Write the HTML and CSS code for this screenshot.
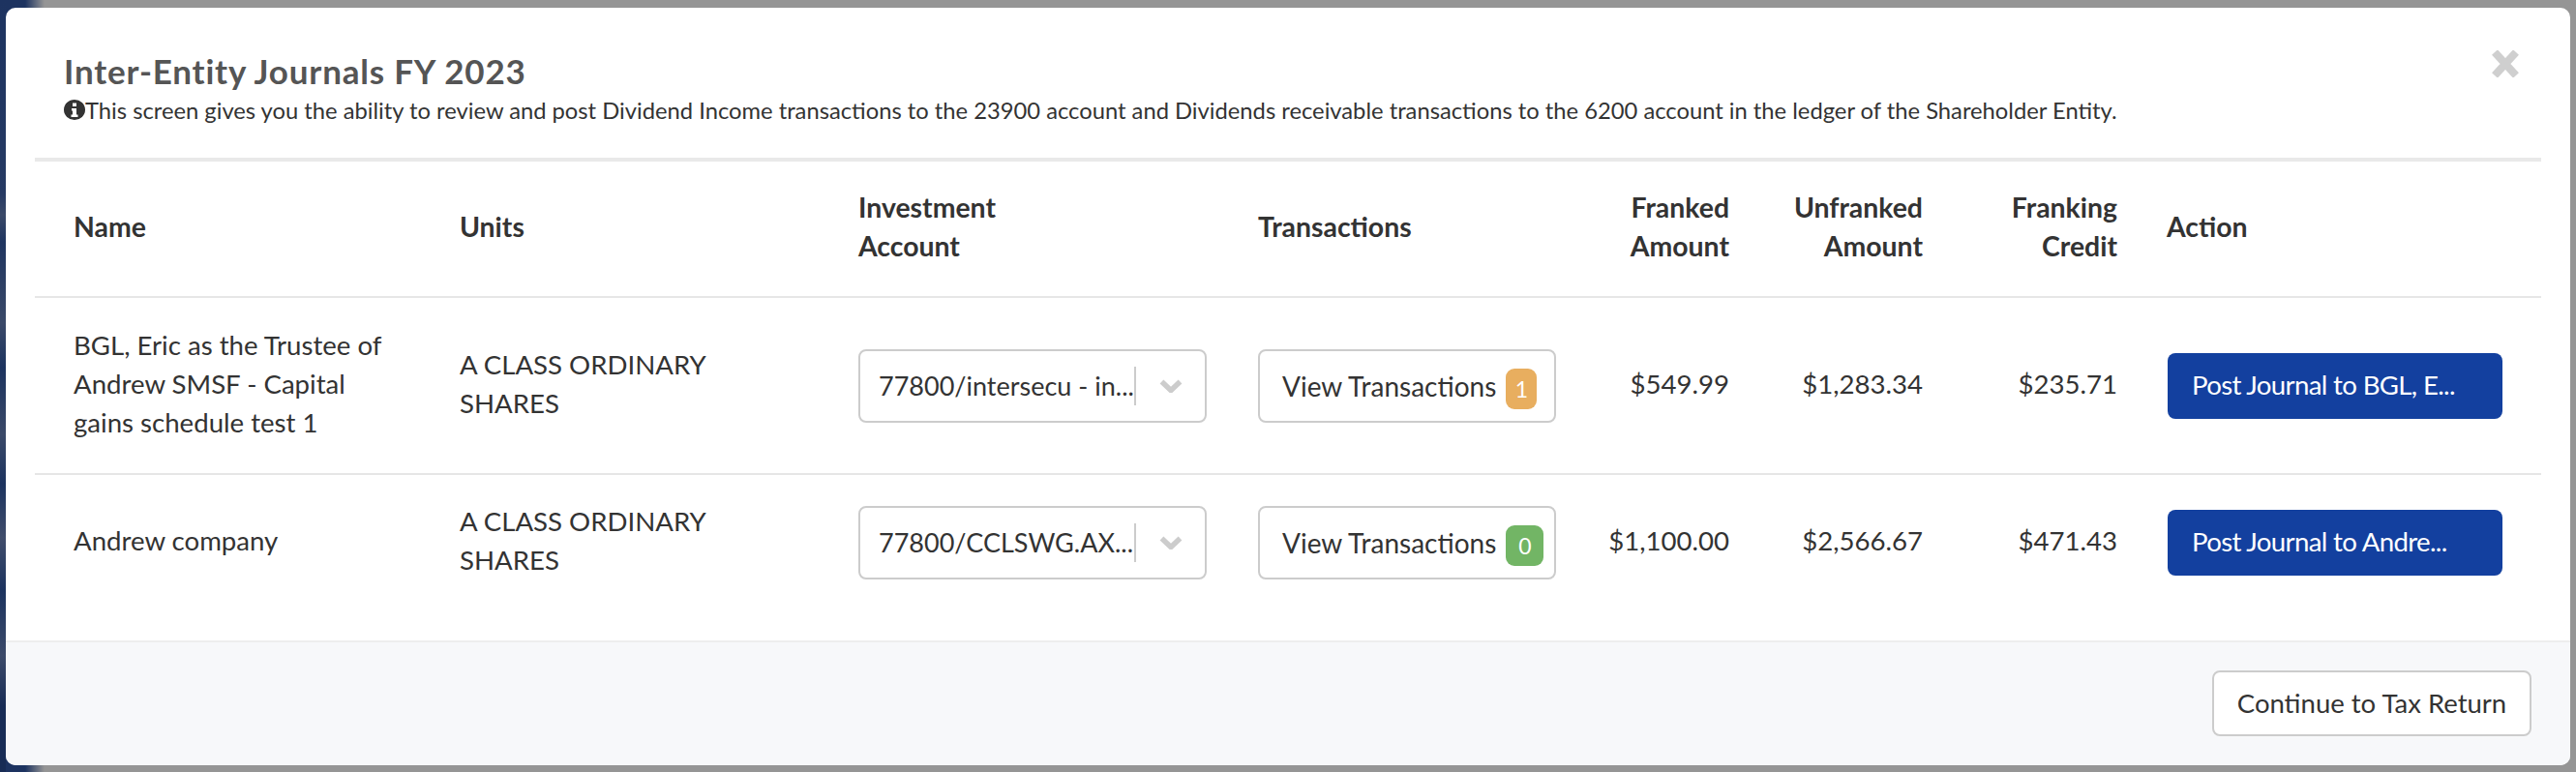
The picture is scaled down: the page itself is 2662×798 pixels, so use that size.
FILE: index.html
```html
<!DOCTYPE html>
<html lang="en">
<head>
<meta charset="utf-8">
<title>Inter-Entity Journals FY 2023</title>
<link rel="stylesheet" href="styles.css">
</head>
<body>
<div class="modal">
  <header class="modal-head">
    <h1 class="title">Inter-Entity Journals FY 2023</h1>
    <p class="intro"><svg class="info" viewBox="0 0 22 22" aria-hidden="true"><path fill-rule="evenodd" d="M11 0a11 10.5 0 1 0 0 21a11 10.5 0 1 0 0-21ZM9 3.5h4v3.5h-4ZM8 9h5v6.5h1.5v2.5h-7v-2.5h1.5v-4h-1Z"/></svg>This screen gives you the ability to review and post Dividend Income transactions to the 23900 account and Dividends receivable transactions to the 6200 account in the ledger of the Shareholder Entity.</p>
    <button class="close" type="button" aria-label="Close"><svg viewBox="0 0 28 28" aria-hidden="true"><path d="M3 2l22 24M25 2L3 26"/></svg></button>
  </header>
  <div class="modal-body">
    <table class="journals">
      <colgroup>
        <col class="c-name"><col class="c-units"><col class="c-acct"><col class="c-tx"><col class="c-fr"><col class="c-un"><col class="c-cr"><col class="c-act">
      </colgroup>
      <thead>
        <tr>
          <th>Name</th>
          <th>Units</th>
          <th>Investment<br>Account</th>
          <th>Transactions</th>
          <th class="num">Franked<br>Amount</th>
          <th class="num">Unfranked<br>Amount</th>
          <th class="num">Franking<br>Credit</th>
          <th class="act">Action</th>
        </tr>
      </thead>
      <tbody>
        <tr class="row-a">
          <td>BGL, Eric as the Trustee of<br>Andrew SMSF - Capital<br>gains schedule test 1</td>
          <td>A CLASS ORDINARY<br>SHARES</td>
          <td>
            <div class="select">
              <span class="select-value">77800/intersecu - in...</span>
              <span class="select-sep"></span>
              <svg class="chev" viewBox="0 0 24 14" aria-hidden="true"><path d="M2.5 2.5L12 11.5L21.5 2.5"/></svg>
            </div>
          </td>
          <td><button class="ghost tx" type="button">View Transactions<span class="badge warn">1</span></button></td>
          <td class="num">$549.99</td>
          <td class="num">$1,283.34</td>
          <td class="num">$235.71</td>
          <td class="act"><button class="primary" type="button">Post Journal to BGL, E...</button></td>
        </tr>
        <tr class="row-b">
          <td>Andrew company</td>
          <td>A CLASS ORDINARY<br>SHARES</td>
          <td>
            <div class="select">
              <span class="select-value">77800/CCLSWG.AX...</span>
              <span class="select-sep"></span>
              <svg class="chev" viewBox="0 0 24 14" aria-hidden="true"><path d="M2.5 2.5L12 11.5L21.5 2.5"/></svg>
            </div>
          </td>
          <td><button class="ghost tx" type="button">View Transactions<span class="badge ok">0</span></button></td>
          <td class="num">$1,100.00</td>
          <td class="num">$2,566.67</td>
          <td class="num">$471.43</td>
          <td class="act"><button class="primary" type="button">Post Journal to Andre...</button></td>
        </tr>
      </tbody>
    </table>
  </div>
  <footer class="modal-foot">
    <button class="ghost cont" type="button">Continue to Tax Return</button>
  </footer>
</div>
</body>
</html>
```
FILE: styles.css
```css
* { box-sizing: border-box; }
html, body { margin: 0; height: 798px; overflow: hidden; }
body {
  padding: 8px 6px 7px;
  font-family: Lato, "Open Sans", sans-serif;
  color: #333;
  background:
    linear-gradient(180deg, #1d3360 0, #263a63 200px, #3a4968 222px, #1f3560 250px, #3a4968 334px, #1c335f 380px, #3a4968 449px, #1c335f 500px, #404d6b 556px, #1c335f 610px, #3c4a69 678px, #182c55 730px, #182c55 100%) 0 0 / 6px 100% no-repeat,
    linear-gradient(90deg, #1d3360 0, #1d3360 26px, #959595 46px, #959595 100%);
}
.modal {
  height: 783px;
  display: flex;
  flex-direction: column;
  background: #fff;
  border-radius: 10px;
  overflow: hidden;
}
.modal-head {
  position: relative;
  height: 159px;
  margin: 0 30px;
  padding: 45px 0 0 30px;
  border-bottom: 4px solid #e9e9e9;
}
.title {
  margin: 0;
  font-size: 35px;
  line-height: 40px;
  font-weight: 700;
  letter-spacing: .8px;
  color: #555;
}
.intro {
  margin: 4px 0 0;
  font-size: 23.75px;
  line-height: 34px;
  white-space: nowrap;
  display: flex;
  align-items: center;
}
.info { width: 22px; height: 22px; fill: #333; flex: none; }
.close {
  position: absolute;
  top: 44px;
  right: 23px;
  width: 28px;
  height: 28px;
  padding: 0;
  border: 0;
  background: none;
}
.close svg { display: block; width: 28px; height: 28px; fill: none; stroke: #cfcfcf; stroke-width: 8; }
.modal-body { flex: 1; padding: 0 30px; }
.journals {
  width: 2590px;
  table-layout: fixed;
  border-collapse: collapse;
  font-size: 27.6px;
  line-height: 40px;
}
.c-name { width: 419px; }
.c-units { width: 412px; }
.c-acct { width: 413px; }
.c-tx { width: 348px; }
.c-fr { width: 179px; }
.c-un { width: 200px; }
.c-cr { width: 201px; }
.c-act { width: 418px; }
th, td { padding: 0 20px 3px; text-align: left; vertical-align: middle; font-weight: 400; }
th { font-weight: 700; height: 140px; font-size: 28.4px; padding-bottom: 6px; }
th:first-child, td:first-child { padding-left: 40px; }
th.num, td.num { text-align: right; }
th.act, td.act { padding-left: 32px; padding-right: 40px; }
th.act { padding-left: 31px; }
thead tr, .row-a { border-bottom: 2px solid #e6e6e6; }
.row-a { height: 183px; }
.row-b { height: 140px; }
.select {
  display: flex;
  align-items: center;
  width: 360px;
  height: 76px;
  margin-top: 3px;
  padding-left: 19px;
  border: 2px solid #ccc;
  border-radius: 8px;
  background: #fff;
  font-size: 27px;
}
.select-value { width: 264px; white-space: nowrap; overflow: hidden; }
.select-sep { width: 2px; height: 40px; background: #ccc; flex: none; }
.chev { width: 24px; height: 14px; margin-left: 24px; fill: none; stroke: #ccc; stroke-width: 5.5; flex: none; }
button { font: inherit; color: inherit; cursor: pointer; }
.ghost {
  display: inline-flex;
  align-items: center;
  background: #fff;
  border: 2px solid #ccc;
  border-radius: 8px;
  white-space: nowrap;
}
.tx { width: 308px; height: 76px; margin-top: 3px; padding: 0 0 0 23px; display: flex; font-size: 28px; }
.badge {
  margin: 6px 0 0 10px;
  height: 42px;
  border-radius: 9px;
  color: #fff;
  font-size: 23px;
  line-height: 42px;
  text-align: center;
}
.warn { width: 32px; background: #e8ae5f; }
.ok { width: 39px; background: #72b565; }
.primary {
  display: block;
  width: 346px;
  height: 68px;
  margin-top: 3px;
  padding: 0 0 2px 25px;
  border: 0;
  border-radius: 8px;
  background: #13409f;
  color: #fff;
  text-align: left;
  white-space: nowrap;
  letter-spacing: -.65px;
}
.modal-foot {
  height: 129px;
  display: flex;
  justify-content: flex-end;
  align-items: flex-start;
  padding: 29px 40px 0 0;
  background: #f7f8fa;
  border-top: 2px solid #eee;
  font-size: 27.5px;
}
.cont { width: 330px; height: 68px; padding-bottom: 2px; justify-content: center; }
```
